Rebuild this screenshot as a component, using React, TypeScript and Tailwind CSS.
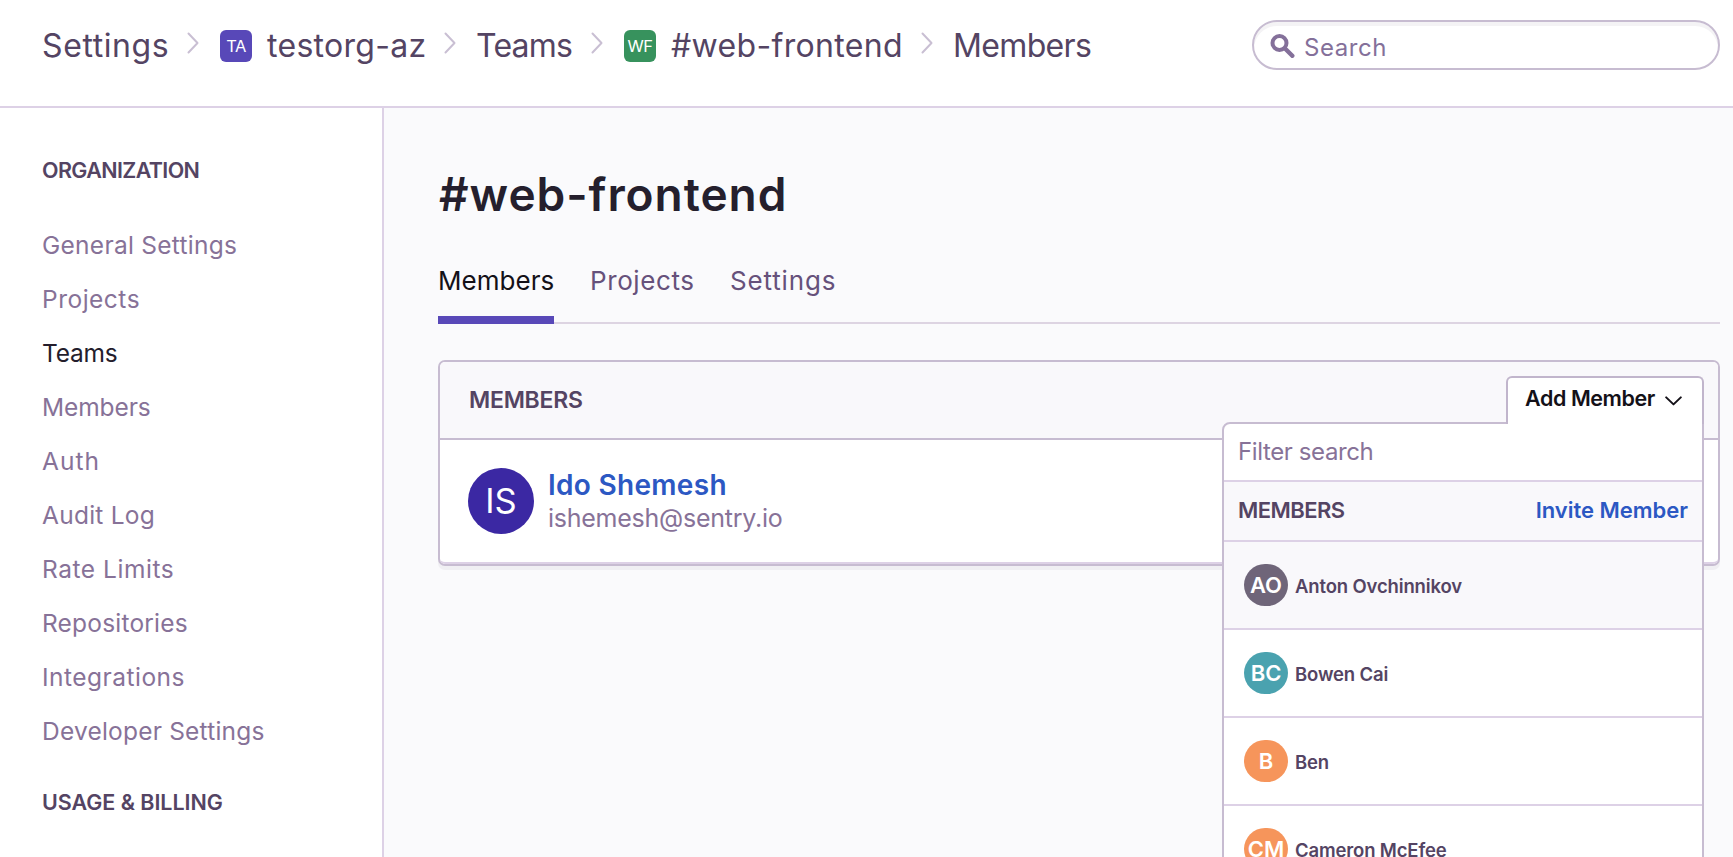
import type { ReactNode } from "react";

const navItems = [
  { label: "General Settings", tracking: "tracking-[0.27px]" },
  { label: "Projects", tracking: "tracking-[0.5px]" },
  { label: "Teams", tracking: "tracking-[-0.24px]", active: true },
  { label: "Members", tracking: "tracking-[-0.1px]" },
  { label: "Auth", tracking: "tracking-[1px]" },
  { label: "Audit Log", tracking: "tracking-[0.25px]" },
  { label: "Rate Limits", tracking: "tracking-[0.55px]" },
  { label: "Repositories", tracking: "tracking-[0.2px]" },
  { label: "Integrations", tracking: "tracking-[0.48px]" },
  { label: "Developer Settings", tracking: "tracking-[0.21px]" },
];

const people = [
  { name: "Anton Ovchinnikov", initials: "AO", color: "bg-[#6f6579]", row: "bg-[#f9f8fb]" },
  { name: "Bowen Cai", initials: "BC", color: "bg-[#4aa2af]", row: "bg-white" },
  { name: "Ben", initials: "B", color: "bg-[#f6955b]", row: "bg-white" },
  { name: "Cameron McEfee", initials: "CM", color: "bg-[#f6955b]", row: "bg-white" },
];

function Separator() {
  return (
    <svg className="-mt-[5px] h-[22px] w-3 shrink-0" viewBox="0 0 12 22" fill="none" stroke="#c9bfd3" strokeWidth="2" strokeLinecap="round" strokeLinejoin="round">
      <path d="M1.5 1.5 L10.5 11 L1.5 20.5" />
    </svg>
  );
}

function Badge({ color, children }: { color: string; children: ReactNode }) {
  return (
    <span className={`${color} mr-3.5 flex size-8 shrink-0 items-center justify-center rounded-md text-[16.5px] tracking-[-0.6px] text-white`}>
      {children}
    </span>
  );
}

function Header() {
  return (
    <header className="flex h-[108px] shrink-0 items-start justify-between border-b-2 border-[#ddd1e6] bg-white pt-5 pr-[13px] pl-[41px]">
      <nav className="mt-[5.5px] flex h-10 items-center text-[32px] leading-10 whitespace-nowrap text-[#544463]">
        <span className="w-[146px] pl-px tracking-[0.6px]">Settings</span>
        <Separator />
        <span className="ml-[21px] flex items-center">
          <span className="mt-px"><Badge color="bg-[#5848b8]">TA</Badge></span>
          <span className="w-[178px] pl-px tracking-[0.3px]">testorg-az</span>
        </span>
        <Separator />
        <span className="ml-5 w-[115px] tracking-[-0.78px]">Teams</span>
        <Separator />
        <span className="ml-[21px] flex items-center">
          <span className="mt-px"><Badge color="bg-[#37925d]">WF</Badge></span>
          <span className="w-[251px] pl-px tracking-[0.33px]">#web-frontend</span>
        </span>
        <Separator />
        <span className="ml-5 tracking-[-0.65px]">Members</span>
      </nav>
      <div className="flex h-[50px] w-[468px] items-center rounded-full border-2 border-[#c7bcd1] bg-white pl-4 text-[#84709a] shadow-[inset_0_4px_0_#f4f3f5]">
        <svg className="mt-0.5 h-6 w-[25px]" viewBox="0 0 25 24" fill="none" stroke="#84709a" strokeLinecap="round">
          <circle cx="9.5" cy="9" r="7" strokeWidth="4" />
          <path d="M15 14.5 L22.3 21.8" strokeWidth="4.4" />
        </svg>
        <span className="mt-1.5 ml-[9px] text-[24px] leading-7 tracking-[0.57px]">Search</span>
      </div>
    </header>
  );
}

function Sidebar() {
  return (
    <aside className="w-96 shrink-0 border-r-2 border-[#ddd1e6] bg-white pt-[50px] pl-[42px]">
      <h2 className="text-[21.5px] leading-6 font-semibold tracking-[-0.62px] text-[#544463]">ORGANIZATION</h2>
      <ul className="mt-9 text-[24.5px] leading-[54px]">
        {navItems.map((item) => (
          <li key={item.label} className={`${item.tracking} ${item.active ? "text-[#241d2c]" : "text-[#877298]"}`}>
            {item.label}
          </li>
        ))}
      </ul>
      <h2 className="mt-8 text-[21.5px] leading-6 font-semibold tracking-[-0.04px] text-[#544463]">USAGE &amp; BILLING</h2>
    </aside>
  );
}

function AddMemberMenu() {
  return (
    <>
      <div className="absolute top-[60px] right-3.5 w-[482px] rounded-tl-lg border-2 border-[#c7bcd1] bg-white">
        <div className="h-[58px] border-b-2 border-[#ddd1e6] pl-3.5 text-[24px] leading-[55px] tracking-[-0.39px] text-[#877298]">
          Filter search
        </div>
        <div className="flex h-[60px] justify-between border-b-2 border-[#ddd1e6] bg-[#f9f8fb] pr-3.5 pl-3.5 text-[22px] leading-[57px] font-semibold">
          <span className="tracking-[-0.55px] text-[#544463]">MEMBERS</span>
          <span className="tracking-[-0.02px] text-[#2c58c3]">Invite Member</span>
        </div>
        {people.map((p) => (
          <div key={p.name} className={`${p.row} flex h-[88px] items-center border-b-2 border-[#ddd1e6] pl-5`}>
            <span className={`${p.color} flex h-[42px] w-11 items-center justify-center rounded-full text-[22px] font-semibold text-white`}>
              {p.initials}
            </span>
            <span className="ml-[7px] pt-px text-[18.5px] leading-6 font-semibold tracking-[-0.15px] text-[#544463]">{p.name}</span>
          </div>
        ))}
      </div>
      <div className="absolute top-3.5 right-3.5 flex h-12 w-[198px] items-start rounded-t-md border-2 border-b-0 border-[#c1b5cc] bg-white pt-2 pl-[17px] text-[21.5px] leading-6 font-semibold tracking-[-0.42px] text-[#141118]">
        Add Member
        <svg className="mt-[10px] mr-[20px] ml-auto h-2.5 w-[17px]" viewBox="0 0 17 10" fill="none" stroke="currentColor" strokeWidth="2" strokeLinecap="round" strokeLinejoin="round">
          <path d="M1.2 1.4 L8.5 8.4 L15.8 1.4" />
        </svg>
      </div>
    </>
  );
}

function Content() {
  return (
    <main className="min-w-0 flex-1 bg-[#fafafc] pt-[61px] pr-[13px] pl-[54px]">
      <h1 className="pl-px text-[46px] leading-[50px] font-semibold tracking-[0.95px] text-[#251f2d]">#web-frontend</h1>
      <div className="mt-[25px] flex h-20 text-[26px] leading-[74px] text-[#66517b] shadow-[inset_0_-2px_0_#ddd4e2]">
        <span className="h-20 w-[116px] border-b-8 border-[#5848b8] tracking-[0.05px] text-[#141118]">Members</span>
        <span className="ml-9 w-[140px] tracking-[0.6px]">Projects</span>
        <span className="tracking-[0.85px]">Settings</span>
      </div>
      <section className="mt-9 rounded-[7px] border-2 border-[#c7bcd1] bg-white shadow-[0_4px_0_#f0eff3]">
        <div className="relative h-[78px] rounded-t-[5px] border-b-2 border-[#c7bcd1] bg-[#f9f8fb] pl-[29px]">
          <h3 className="text-[23px] leading-[76px] font-semibold tracking-[-0.25px] text-[#544463]">MEMBERS</h3>
          <AddMemberMenu />
        </div>
        <div className="flex h-[124px] items-center gap-3.5 rounded-b-[5px] border-b-2 border-[#ddd1e6] pl-7">
          <span className="flex size-[66px] items-center justify-center rounded-full bg-[#3b28a3] text-[34.5px] text-white">IS</span>
          <div className="pt-px leading-[33px]">
            <div className="text-[28px] font-semibold tracking-[0.3px] text-[#2c58c3]">Ido Shemesh</div>
            <div className="text-[25px] tracking-[-0.25px] text-[#877298]">ishemesh@sentry.io</div>
          </div>
        </div>
      </section>
    </main>
  );
}

export default function App() {
  return (
    <div className="flex h-[857px] w-full flex-col overflow-hidden bg-[#fafafc] font-['Inter','Roboto',sans-serif]">
      <Header />
      <div className="flex min-h-0 flex-1">
        <Sidebar />
        <Content />
      </div>
    </div>
  );
}
